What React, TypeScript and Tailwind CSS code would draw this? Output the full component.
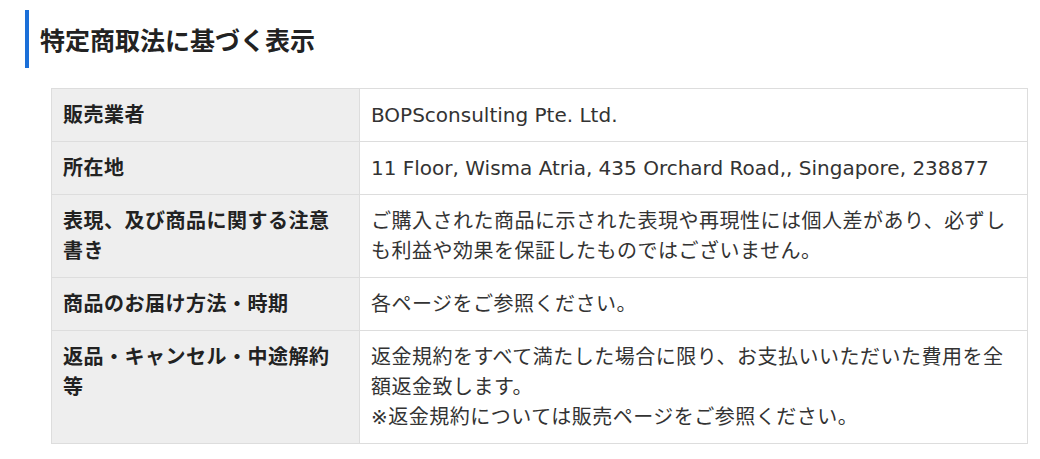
const font = { fontFamily: '"DejaVu Sans", "Noto Sans CJK JP", sans-serif' };

type Row = { label: string; value: React.ReactNode; latin?: boolean };

const rows: Row[] = [
  { label: '販売業者', value: 'BOPSconsulting Pte. Ltd.', latin: true },
  { label: '所在地', value: '11 Floor, Wisma Atria, 435 Orchard Road,, Singapore, 238877', latin: true },
  {
    label: '表現、及び商品に関する注意書き',
    value: 'ご購入された商品に示された表現や再現性には個人差があり、必ずしも利益や効果を保証したものではございません。',
  },
  { label: '商品のお届け方法・時期', value: '各ページをご参照ください。' },
  {
    label: '返品・キャンセル・中途解約等',
    value: (
      <>
        返金規約をすべて満たした場合に限り、お支払いいただいた費用を全額返金致します。
        <br />
        ※返金規約については販売ページをご参照ください。
      </>
    ),
  },
];

export default function App() {
  return (
    <div className="bg-white min-h-[459px] pt-[10px] pl-[25px] text-[#222]" style={{ fontFamily: '"Noto Sans CJK JP", sans-serif' }}>
      <h2 className="flex items-center h-[58px] border-l-4 border-[#1b6fd8] pl-[11px] text-[25px] font-bold leading-none">
        特定商取法に基づく表示
      </h2>
      <table className="mt-[20px] ml-[26px] w-[977px] border-collapse text-[20px] leading-[30px]" style={font}>
        <tbody>
          {rows.map((r) => (
            <tr key={r.label}>
              <th className="w-[308px] border border-[#dddddd] bg-[#eeeeee] px-[11px] py-[11px] text-left align-top font-bold tracking-[0.5px] text-[#222]">
                {r.label}
              </th>
              <td
                className={
                  r.latin
                    ? 'border border-[#dddddd] px-[11px] py-[11px] align-top text-[#333]'
                    : 'border border-[#dddddd] px-[11px] py-[11px] align-top tracking-[0.5px] text-[#333]'
                }
              >
                {r.value}
              </td>
            </tr>
          ))}
        </tbody>
      </table>
    </div>
  );
}
